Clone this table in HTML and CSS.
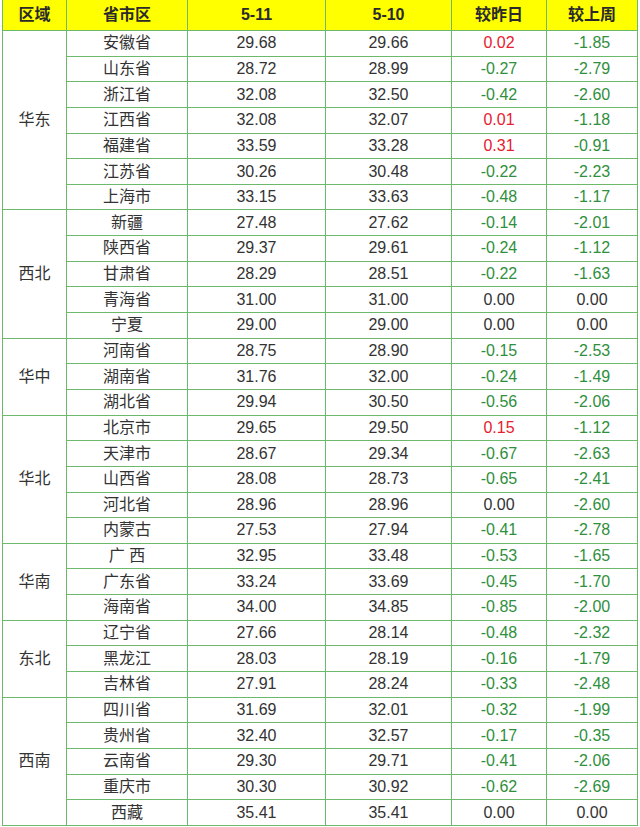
FILE: index.html
```html
<!DOCTYPE html>
<html lang="zh">
<head>
<meta charset="utf-8">
<title>价格表</title>
<link rel="stylesheet" href="styles.css">
</head>
<body>
<table class="grid">
<colgroup>
<col class="c1"><col class="c2"><col class="c3"><col class="c4"><col class="c5"><col class="c6">
</colgroup>
<thead>
<tr class="head"><th>区域</th><th>省市区</th><th>5-11</th><th>5-10</th><th>较昨日</th><th>较上周</th></tr>
</thead>
<tbody>
<tr><td rowspan="7" class="reg">华东</td><td>安徽省</td><td>29.68</td><td>29.66</td><td class="up">0.02</td><td class="dn">-1.85</td></tr>
<tr><td>山东省</td><td>28.72</td><td>28.99</td><td class="dn">-0.27</td><td class="dn">-2.79</td></tr>
<tr><td>浙江省</td><td>32.08</td><td>32.50</td><td class="dn">-0.42</td><td class="dn">-2.60</td></tr>
<tr><td>江西省</td><td>32.08</td><td>32.07</td><td class="up">0.01</td><td class="dn">-1.18</td></tr>
<tr><td>福建省</td><td>33.59</td><td>33.28</td><td class="up">0.31</td><td class="dn">-0.91</td></tr>
<tr><td>江苏省</td><td>30.26</td><td>30.48</td><td class="dn">-0.22</td><td class="dn">-2.23</td></tr>
<tr><td>上海市</td><td>33.15</td><td>33.63</td><td class="dn">-0.48</td><td class="dn">-1.17</td></tr>
<tr><td rowspan="5" class="reg">西北</td><td>新疆</td><td>27.48</td><td>27.62</td><td class="dn">-0.14</td><td class="dn">-2.01</td></tr>
<tr><td>陕西省</td><td>29.37</td><td>29.61</td><td class="dn">-0.24</td><td class="dn">-1.12</td></tr>
<tr><td>甘肃省</td><td>28.29</td><td>28.51</td><td class="dn">-0.22</td><td class="dn">-1.63</td></tr>
<tr><td>青海省</td><td>31.00</td><td>31.00</td><td>0.00</td><td>0.00</td></tr>
<tr><td>宁夏</td><td>29.00</td><td>29.00</td><td>0.00</td><td>0.00</td></tr>
<tr><td rowspan="3" class="reg">华中</td><td>河南省</td><td>28.75</td><td>28.90</td><td class="dn">-0.15</td><td class="dn">-2.53</td></tr>
<tr><td>湖南省</td><td>31.76</td><td>32.00</td><td class="dn">-0.24</td><td class="dn">-1.49</td></tr>
<tr><td>湖北省</td><td>29.94</td><td>30.50</td><td class="dn">-0.56</td><td class="dn">-2.06</td></tr>
<tr><td rowspan="5" class="reg">华北</td><td>北京市</td><td>29.65</td><td>29.50</td><td class="up">0.15</td><td class="dn">-1.12</td></tr>
<tr><td>天津市</td><td>28.67</td><td>29.34</td><td class="dn">-0.67</td><td class="dn">-2.63</td></tr>
<tr><td>山西省</td><td>28.08</td><td>28.73</td><td class="dn">-0.65</td><td class="dn">-2.41</td></tr>
<tr><td>河北省</td><td>28.96</td><td>28.96</td><td>0.00</td><td class="dn">-2.60</td></tr>
<tr><td>内蒙古</td><td>27.53</td><td>27.94</td><td class="dn">-0.41</td><td class="dn">-2.78</td></tr>
<tr><td rowspan="3" class="reg">华南</td><td>广 西</td><td>32.95</td><td>33.48</td><td class="dn">-0.53</td><td class="dn">-1.65</td></tr>
<tr><td>广东省</td><td>33.24</td><td>33.69</td><td class="dn">-0.45</td><td class="dn">-1.70</td></tr>
<tr><td>海南省</td><td>34.00</td><td>34.85</td><td class="dn">-0.85</td><td class="dn">-2.00</td></tr>
<tr><td rowspan="3" class="reg">东北</td><td>辽宁省</td><td>27.66</td><td>28.14</td><td class="dn">-0.48</td><td class="dn">-2.32</td></tr>
<tr><td>黑龙江</td><td>28.03</td><td>28.19</td><td class="dn">-0.16</td><td class="dn">-1.79</td></tr>
<tr><td>吉林省</td><td>27.91</td><td>28.24</td><td class="dn">-0.33</td><td class="dn">-2.48</td></tr>
<tr><td rowspan="5" class="reg">西南</td><td>四川省</td><td>31.69</td><td>32.01</td><td class="dn">-0.32</td><td class="dn">-1.99</td></tr>
<tr><td>贵州省</td><td>32.40</td><td>32.57</td><td class="dn">-0.17</td><td class="dn">-0.35</td></tr>
<tr><td>云南省</td><td>29.30</td><td>29.71</td><td class="dn">-0.41</td><td class="dn">-2.06</td></tr>
<tr><td>重庆市</td><td>30.30</td><td>30.92</td><td class="dn">-0.62</td><td class="dn">-2.69</td></tr>
<tr><td>西藏</td><td>35.41</td><td>35.41</td><td>0.00</td><td>0.00</td></tr>
</tbody>
</table>
</body>
</html>
```

FILE: styles.css
```css
html, body {
  margin: 0;
  padding: 0;
  background: #ffffff;
}
body {
  padding: 0 0 0 2px;
  margin-top: -1px;
}
.grid {
  border-collapse: collapse;
  table-layout: fixed;
  width: 635px;
  font-family: "Liberation Sans", "Noto Sans CJK SC", sans-serif;
  font-size: 16px;
  color: #333333;
}
.c1 { width: 64px; }
.c2 { width: 121px; }
.c3 { width: 138px; }
.c4 { width: 126px; }
.c5 { width: 95px; }
.c6 { width: 91px; }
.grid th, .grid td {
  border: 1px solid #6cb96c;
  text-align: center;
  vertical-align: middle;
  padding: 0;
  line-height: 18px;
}
.grid th {
  background: #ffff00;
  font-weight: bold;
  color: #2a2a2a;
  height: 30px;
  font-size: 16px;
}
.grid td {
  height: 24.65px;
}
.grid td.up { color: #e8202e; }
.grid td.dn { color: #2f8f3d; }
```
